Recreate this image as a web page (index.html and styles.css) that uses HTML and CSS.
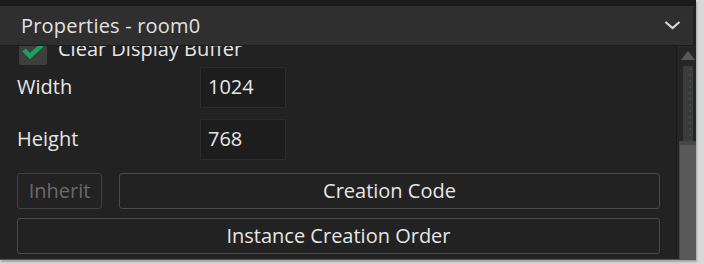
FILE: index.html
```html
<!DOCTYPE html>
<html>
<head>
<meta charset="utf-8">
<link rel="stylesheet" href="styles.css">
</head>
<body>
<div class="panel">
  <div class="topstrip"></div>
  <div class="header">
    <span class="title">Properties - room0</span>
    <svg class="chevron" width="17" height="10" viewBox="0 0 17 10"><path d="M1.5 2 L8.5 8 L15.5 2" fill="none" stroke="#d8d8d8" stroke-width="2.2"/></svg>
  </div>
  <div class="main">
    <div class="viewport">
      <div class="content">
        <div class="checkrow">
          <span class="checkbox"><svg width="22" height="16" viewBox="0 0 22 16"><path d="M2 7 L8 13 L20 2" fill="none" stroke="#1aa35a" stroke-width="4.5"/></svg></span>
          <span class="checklabel">Clear Display Buffer</span>
        </div>
        <div class="field">
          <span class="label">Width</span>
          <span class="input">1024</span>
        </div>
        <div class="field">
          <span class="label">Height</span>
          <span class="input">768</span>
        </div>
        <div class="btnrow">
          <button class="btn disabled">Inherit</button>
          <button class="btn wide">Creation Code</button>
        </div>
        <div class="btnrow">
          <button class="btn wide">Instance Creation Order</button>
        </div>
      </div>
    </div>
    <div class="scrollbar">
      <div class="arrow"></div>
      <div class="track"></div>
      <div class="thumb"><div class="cap"></div></div>
    </div>
  </div>
</div>
</body>
</html>
```

FILE: styles.css
```css
html, body {
  margin: 0;
  padding: 0;
}
body {
  width: 704px;
  height: 264px;
  background: #d9d9d9;
  font-family: "Open Sans", "Noto Sans", sans-serif;
  overflow: hidden;
}
.panel {
  width: 696px;
  height: 259px;
  background: #222222;
  display: flex;
  flex-direction: column;
  overflow: hidden;
  border-bottom: 1px solid #555;
  box-shadow: 1px 2px 2px rgba(0,0,0,0.25);
}
.topstrip {
  height: 6px;
  background: #1b1b1b;
  flex: none;
}
.header {
  flex: none;
  height: 39px;
  background: #2f2f2f;
  border-bottom: 1px solid #1c1c1c;
  display: flex;
  align-items: center;
  justify-content: space-between;
  padding: 0 12px 0 21px;
  margin-right: 3px;
  position: relative;
  z-index: 1;
}
.title {
  color: #e2e2e2;
  font-size: 20px;
  margin-top: -1px;
  letter-spacing: 0.2px;
}
.chevron {
  margin-top: -2px;
}
.main {
  flex: 1;
  display: flex;
  min-height: 0;
}
.viewport {
  flex: 1;
  overflow: hidden;
  border-right: 1px solid #1a1a1a;
}
.content {
  margin-top: -9px;
  padding: 0 16px 0 17px;
}
.checkrow {
  height: 28px;
  display: flex;
  align-items: center;
  padding-left: 2px;
  gap: 11px;
}
.checkbox {
  width: 28px;
  height: 28px;
  background: #3e3e3e;
  border-radius: 2px;
  display: flex;
  align-items: center;
  justify-content: center;
}
.checklabel {
  color: #e6e6e6;
  font-size: 20px;
  margin-top: -5px;
}
.field {
  display: flex;
  align-items: center;
  height: 41px;
  margin-top: 11px;
}
.checkrow + .field {
  margin-top: 2px;
}
.label {
  width: 183px;
  color: #e6e6e6;
  font-size: 20px;
  margin-top: -2px;
}
.input {
  box-sizing: border-box;
  width: 86px;
  height: 41px;
  background: #1d1d1d;
  border: 1px solid #2c2c2c;
  color: #e6e6e6;
  font-size: 20px;
  padding-left: 7px;
  line-height: 38px;
}
.btnrow {
  display: flex;
  gap: 17px;
  margin-top: 13px;
}
.btnrow + .btnrow {
  margin-top: 9px;
}
.btn {
  box-sizing: border-box;
  height: 36px;
  background: #222222;
  border: 1px solid #4a4a4a;
  border-radius: 3px;
  color: #e6e6e6;
  font-family: "Open Sans", "Noto Sans", sans-serif;
  font-size: 20px;
  padding: 0;
  line-height: 32px;
}
.btn.disabled {
  width: 85px;
  color: #6a6a6a;
  border-color: #404040;
}
.btn.wide {
  flex: 1;
}
.scrollbar {
  flex: none;
  width: 19px;
  background: #262626;
  display: flex;
  flex-direction: column;
  align-items: center;
  padding-top: 5px;
}
.arrow {
  width: 0;
  height: 0;
  border-left: 7px solid transparent;
  border-right: 7px solid transparent;
  border-bottom: 9px solid #5a5a5a;
  margin-left: 2px;
}
.track {
  width: 10px;
  height: 75px;
  margin-top: 6px;
  margin-left: 2px;
  background: #3a3c3b radial-gradient(circle, #2f5f49 0.5px, transparent 1px) 2px 0 / 10px 6px;
}
.thumb {
  width: 18px;
  flex: 1;
  background: #595959;
  margin-left: 3px;
  border-left: 1px solid #444;
}
.cap {
  height: 4px;
  background: #474747;
}
```
